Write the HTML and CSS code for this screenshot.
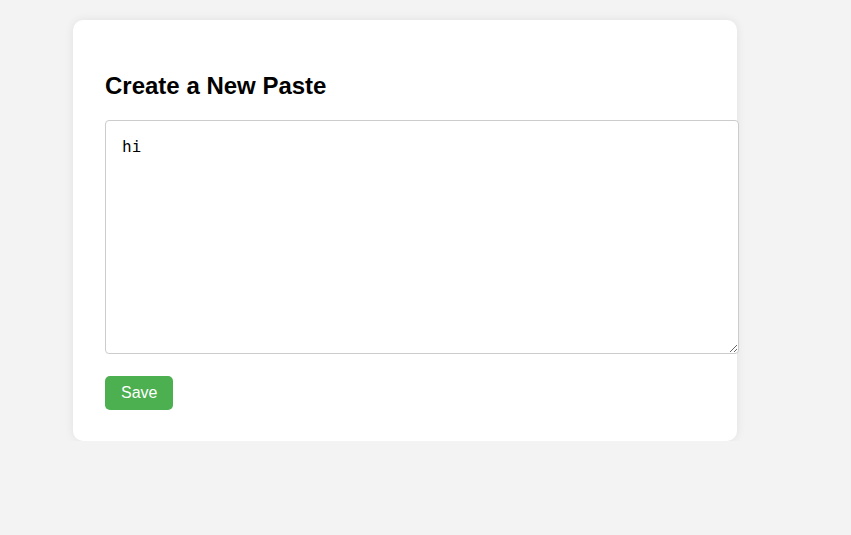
FILE: index.html
```html
<!DOCTYPE html>
<html lang="en">
<head>
<meta charset="utf-8">
<title>Create a New Paste</title>
<link rel="stylesheet" href="styles.css">
</head>
<body>
<div class="card">
  <h2 class="title">Create a New Paste</h2>
  <textarea class="editor">hi</textarea>
  <button class="save">Save</button>
</div>
</body>
</html>
```
FILE: styles.css
```css
html, body {
  margin: 0;
  padding: 0;
}
body {
  background: #f3f3f3;
  font-family: "Liberation Sans", Arial, sans-serif;
  padding: 20px 0 0 73px;
}
.card {
  width: 600px;
  background: #fff;
  border-radius: 10px;
  box-shadow: 0 0 10px rgba(0, 0, 0, 0.08);
  padding: 32px 32px 31px 32px;
}
.title {
  font-size: 24px;
  font-weight: bold;
  margin: 20px 0 20px;
  color: #000;
}
.editor {
  display: block;
  box-sizing: content-box;
  width: 100%;
  height: 200px;
  padding: 16px;
  margin: 0;
  border: 1px solid #ccc;
  border-radius: 4px;
  font-family: "DejaVu Sans Mono", monospace;
  font-size: 16px;
  color: #000;
  background: #fff;
}
.save {
  display: block;
  margin-top: 22px;
  background: #4caf50;
  color: #fff;
  border: none;
  border-radius: 5px;
  padding: 8px 16px;
  font-family: "Liberation Sans", Arial, sans-serif;
  font-size: 16px;
  line-height: 18px;
}
```
